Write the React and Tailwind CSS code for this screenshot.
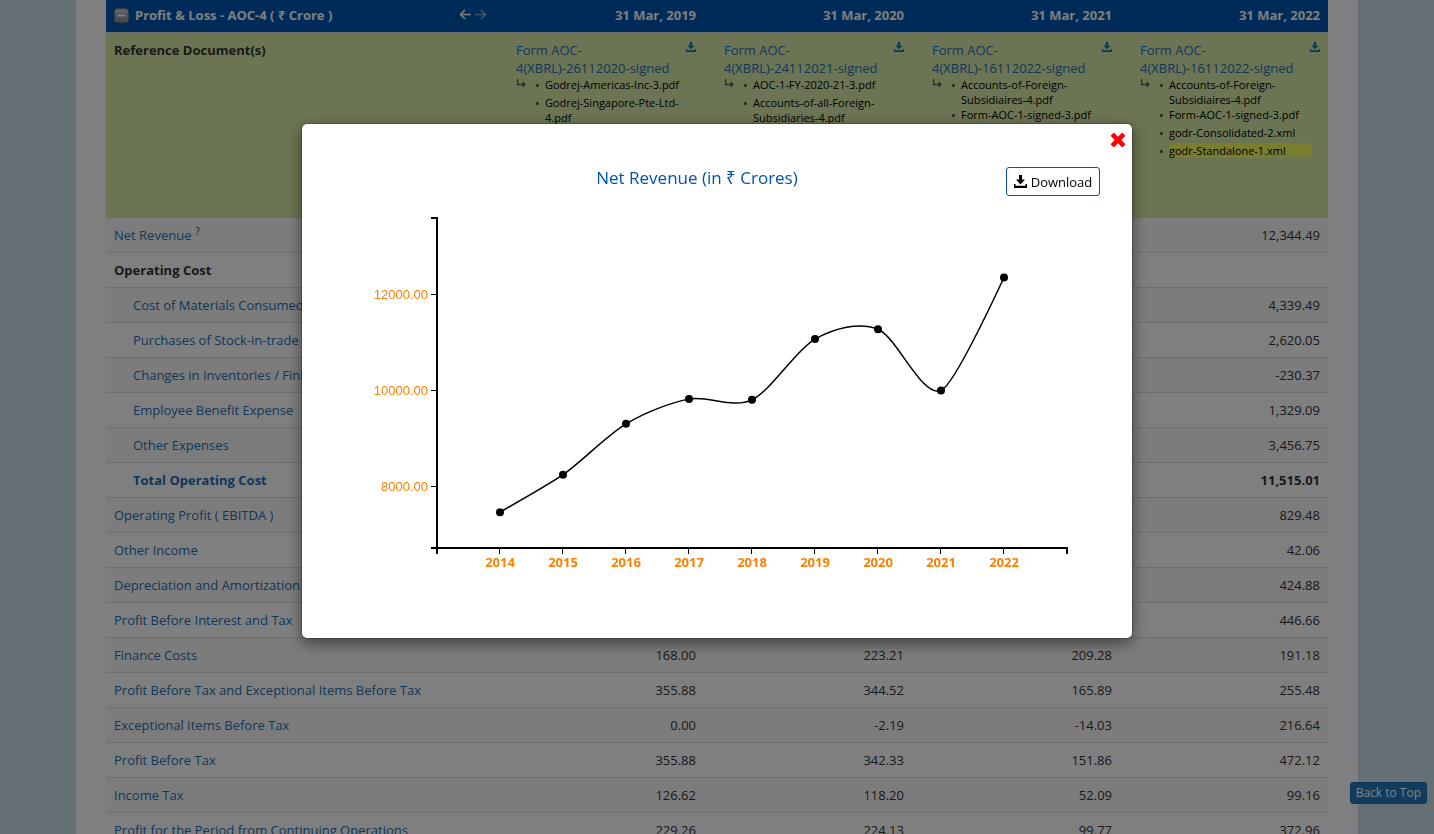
import { useState } from "react";

const years = ["31 Mar, 2019", "31 Mar, 2020", "31 Mar, 2021", "31 Mar, 2022"];

const documents = [
  {
    form: ["Form AOC-", "4(XBRL)-26112020-signed"],
    files: ["Godrej-Americas-Inc-3.pdf", "Godrej-Singapore-Pte-Ltd-4.pdf"],
  },
  {
    form: ["Form AOC-", "4(XBRL)-24112021-signed"],
    files: ["AOC-1-FY-2020-21-3.pdf", "Accounts-of-all-Foreign-Subsidiaries-4.pdf"],
  },
  {
    form: ["Form AOC-", "4(XBRL)-16112022-signed"],
    files: ["Accounts-of-Foreign-Subsidiaires-4.pdf", "Form-AOC-1-signed-3.pdf"],
  },
  {
    form: ["Form AOC-", "4(XBRL)-16112022-signed"],
    files: [
      "Accounts-of-Foreign-Subsidiaires-4.pdf",
      "Form-AOC-1-signed-3.pdf",
      "godr-Consolidated-2.xml",
      "godr-Standalone-1.xml",
    ],
    current: "godr-Standalone-1.xml",
  },
];

const rows = [
  { label: "Net Revenue", help: true, values: ["", "", "", "12,344.49"] },
  { label: "Operating Cost", heading: true, values: ["", "", "", ""] },
  { label: "Cost of Materials Consumed", indent: true, values: ["", "", "", "4,339.49"] },
  { label: "Purchases of Stock-in-trade", indent: true, values: ["", "", "", "2,620.05"] },
  { label: "Changes in Inventories / Finished Goods", indent: true, values: ["", "", "", "-230.37"] },
  { label: "Employee Benefit Expense", indent: true, values: ["", "", "", "1,329.09"] },
  { label: "Other Expenses", indent: true, values: ["", "", "", "3,456.75"] },
  { label: "Total Operating Cost", indent: true, bold: true, values: ["", "", "", "11,515.01"] },
  { label: "Operating Profit ( EBITDA )", values: ["", "", "", "829.48"] },
  { label: "Other Income", values: ["", "", "", "42.06"] },
  { label: "Depreciation and Amortization", values: ["", "", "", "424.88"] },
  { label: "Profit Before Interest and Tax", values: ["", "", "", "446.66"] },
  { label: "Finance Costs", values: ["168.00", "223.21", "209.28", "191.18"] },
  { label: "Profit Before Tax and Exceptional Items Before Tax", values: ["355.88", "344.52", "165.89", "255.48"] },
  { label: "Exceptional Items Before Tax", values: ["0.00", "-2.19", "-14.03", "216.64"] },
  { label: "Profit Before Tax", values: ["355.88", "342.33", "151.86", "472.12"] },
  { label: "Income Tax", values: ["126.62", "118.20", "52.09", "99.16"] },
  { label: "Profit for the Period from Continuing Operations", values: ["229.26", "224.13", "99.77", "372.96"] },
];

const revenue = [
  { year: 2014, value: 7455 },
  { year: 2015, value: 8235 },
  { year: 2016, value: 9295 },
  { year: 2017, value: 9810 },
  { year: 2018, value: 9795 },
  { year: 2019, value: 11060 },
  { year: 2020, value: 11265 },
  { year: 2021, value: 9990 },
  { year: 2022, value: 12344.49 },
];

const xScale = (year) => 74 + (year - 2013) * 63;
const yScale = (value) => 288 - ((value - 8000) * 96) / 2000;

// Cardinal spline, tension 0.7, quadratic at both ends
const cardinalPath = (points) => {
  const k = 0.15;
  const last = points.length - 1;
  const tangent = (i) => [
    k * (points[i + 1][0] - points[i - 1][0]),
    k * (points[i + 1][1] - points[i - 1][1]),
  ];
  let t = tangent(1);
  let d = `M${points[0]}Q${points[1][0] - (t[0] * 2) / 3},${points[1][1] - (t[1] * 2) / 3},${points[1]}`;
  for (let i = 2; i < last; i++) {
    const next = tangent(i);
    const [a, b] = [points[i - 1], points[i]];
    d += `C${a[0] + t[0]},${a[1] + t[1]},${b[0] - next[0]},${b[1] - next[1]},${b}`;
    t = next;
  }
  const p = points[last - 1];
  d += `Q${p[0] + (t[0] * 2) / 3},${p[1] + (t[1] * 2) / 3},${points[last]}`;
  return d;
};

function DownloadIcon({ className }) {
  return (
    <svg className={className} viewBox="0 0 13 13" fill="currentColor" aria-hidden="true">
      <path d="M5 0h3v4.500h3L6.500 9.500 2 4.500H5z" />
      <path d="M0 9h1.500v1.700h10V9H13v4H0z" />
    </svg>
  );
}

function RevenueChart() {
  const points = revenue.map((r) => [xScale(r.year), yScale(r.value)]);

  return (
    <svg className="block w-full" viewBox="0 0 708 374" role="img" aria-label="Net Revenue by year">
      <g fill="none" stroke="#000" strokeWidth="2">
        <path d="M68 20H74V350H68" />
        <path d="M74 356V350H704V356" />
      </g>
      {[8000, 10000, 12000].map((v) => (
        <g key={v}>
          <path d={`M68 ${yScale(v) + 0.5}H74`} stroke="#000" />
          <text x="65" y={yScale(v) + 5} textAnchor="end" fill="#ff7f00" className="font-['Liberation_Sans',sans-serif] text-[13px]">
            {v.toFixed(2)}
          </text>
        </g>
      ))}
      {revenue.map((r) => (
        <g key={r.year}>
          <path d={`M${xScale(r.year) - 0.5} 350V356`} stroke="#000" />
          <text x={xScale(r.year)} y="369" textAnchor="middle" fill="#ff7f00" className="text-[13px] font-bold">
            {r.year}
          </text>
        </g>
      ))}
      <path d={cardinalPath(points)} fill="none" stroke="#000" strokeWidth="1.5" />
      {points.map(([x, y]) => (
        <circle key={x} cx={x} cy={y} r="4" />
      ))}
    </svg>
  );
}

function ChartModal({ onClose }) {
  return (
    <div className="fixed inset-0 bg-black/50 pt-[124px]">
      <div
        role="dialog"
        aria-label="Net Revenue"
        className="relative mx-auto w-[830px] max-w-full rounded-[5px] bg-white pb-[66px] shadow-[0_0_0_1px_rgba(0,0,0,0.2),0_5px_15px_rgba(0,0,0,0.5)]"
      >
        <button type="button" aria-label="Close" onClick={onClose} className="absolute top-2 right-1.5 text-[#f00]">
          <svg className="block size-4" viewBox="0 0 16 16" fill="currentColor">
            <path d="M4.300 1 8 4.700 11.700 1q.5-.4 1 0L15 3.300q.4.5 0 1L11.300 8 15 11.700q.4.5 0 1L12.700 15q-.5.4-1 0L8 11.300 4.300 15q-.5.4-1 0L1 12.700q-.4-.5 0-1L4.700 8 1 4.300q-.4-.5 0-1L3.300 1q.5-.4 1 0z" />
          </svg>
        </button>
        <div className="flex items-start justify-end pt-[43px] pr-8">
          <h2 className="flex-1 pl-[86px] text-center text-[17px] leading-[22px] text-[#0054ac]">
            Net Revenue (in ₹ Crores)
          </h2>
          <button
            type="button"
            className="flex h-[29px] w-[94px] items-center justify-center gap-1 rounded-[3px] border border-[#0054ac] bg-white text-[13px] text-black"
          >
            <DownloadIcon className="size-[13px]" />
            Download
          </button>
        </div>
        <div className="px-[61px] pt-0.5">
          <RevenueChart />
        </div>
      </div>
    </div>
  );
}

function DocumentCell({ doc }) {
  return (
    <td className="py-2 pr-2 pl-5 align-top">
      <div className="flex items-start justify-between">
        <a href="#" className="whitespace-nowrap text-[#1d6fb4]">
          {doc.form[0]}
          <br />
          {doc.form[1]}
        </a>
        <a href="#" aria-label="Download" className="-ml-3 pt-px text-[#1d6fb4]">
          <DownloadIcon className="size-2.5" />
        </a>
      </div>
      <div className="flex">
        <svg className="mt-0.5 size-2.5 text-[#555]" viewBox="0 0 10 10" fill="none" stroke="currentColor" strokeWidth="1.3">
          <path d="M1.500 0V5.500H9M6.500 3 9 5.500 6.500 8" />
        </svg>
        <ul className="ml-[19px] w-[143px] list-none text-[11px] leading-[15px] text-black">
          {doc.files.map((file) => (
            <li key={file} className="relative min-h-[18px]">
              <span className="absolute top-[7px] -left-[9px] size-[3px] rounded-full bg-[#444]" />
              <span className={file === doc.current ? "block bg-[#f2fa60]" : "block"}>{file}</span>
            </li>
          ))}
        </ul>
      </div>
    </td>
  );
}

function App() {
  const [showChart, setShowChart] = useState(true);

  return (
    <div className="h-screen overflow-hidden bg-[#c9deed] font-['Open_Sans','Noto_Sans',sans-serif] text-[13px] leading-[18px] text-[#333]">
      <main className="mx-[76px] min-h-screen bg-white px-[30px]">
        <table className="w-full table-fixed border-separate border-spacing-0">
          <colgroup>
            <col />
            <col className="w-[208px]" />
            <col className="w-[208px]" />
            <col className="w-[208px]" />
            <col className="w-[208px]" />
          </colgroup>
          <thead>
            <tr className="bg-[#0055ae] text-white">
              <th className="px-2 pt-1.5 pb-2 text-left font-bold">
                <div className="flex items-center pr-px">
                  <svg className="mr-1.5 size-[15px]" viewBox="0 0 15 15">
                    <defs>
                      <linearGradient id="toggle" x1="0" y1="0" x2="0" y2="1">
                        <stop offset="0" stopColor="#d2cdc8" />
                        <stop offset="1" stopColor="#8c8782" />
                      </linearGradient>
                    </defs>
                    <rect x="1" y="1" width="13" height="13" rx="2" fill="url(#toggle)" stroke="#a8a39e" />
                    <path d="M3.500 7.500h8" stroke="#7f93b5" strokeWidth="3.500" />
                    <path d="M3.500 7.500h8" stroke="#fff" strokeWidth="2" />
                  </svg>
                  <span className="flex-1">Profit &amp; Loss - AOC-4 ( ₹ Crore )</span>
                  <svg className="h-3 w-7" viewBox="0 0 28 12" fill="none" stroke="currentColor" strokeWidth="1.600">
                    <path d="M12 5.500H1.500M6 1 1.500 5.500 6 10" />
                    <path d="M16 5.500H26.500M22 1 26.500 5.500 22 10" opacity="0.5" />
                  </svg>
                </div>
              </th>
              {years.map((year) => (
                <th key={year} className="px-2 pt-1.5 pb-2 text-right font-bold">
                  {year}
                </th>
              ))}
            </tr>
          </thead>
          <tbody>
            <tr className="h-[185px] bg-[#d6eaa8] [&>*]:border-t [&>*]:border-[#ddd]">
              <th className="p-2 text-left align-top font-bold">Reference Document(s)</th>
              {documents.map((doc, i) => (
                <DocumentCell key={i} doc={doc} />
              ))}
            </tr>
            {rows.map((row) => (
              <tr key={row.label} className="even:bg-[#f9f9f9] [&>*]:border-t [&>*]:border-[#ddd]">
                <th className={`p-2 text-left whitespace-nowrap ${row.bold || row.heading ? "font-bold" : "font-normal"}`}>
                  <div className={row.indent ? "pl-[19px]" : ""}>
                    {row.heading ? (
                      row.label
                    ) : (
                      <a
                        href="#"
                        className="text-[#1d6fb4]"
                        onClick={() => row.help && setShowChart(true)}
                      >
                        {row.label}
                      </a>
                    )}
                    {row.help && <sup className="ml-1 text-[10px]">?</sup>}
                  </div>
                </th>
                {row.values.map((value, i) => (
                  <td key={i} className={`p-2 text-right ${row.bold ? "font-bold" : ""}`}>
                    {value}
                  </td>
                ))}
              </tr>
            ))}
          </tbody>
        </table>
      </main>

      <button
        type="button"
        className="fixed right-[7px] bottom-[30px] rounded-[3px] border border-[#1b6cab] bg-[#2379bf] px-[5px] py-px text-[12px] text-white"
      >
        Back to Top
      </button>

      {showChart && <ChartModal onClose={() => setShowChart(false)} />}
    </div>
  );
}

export default App;
